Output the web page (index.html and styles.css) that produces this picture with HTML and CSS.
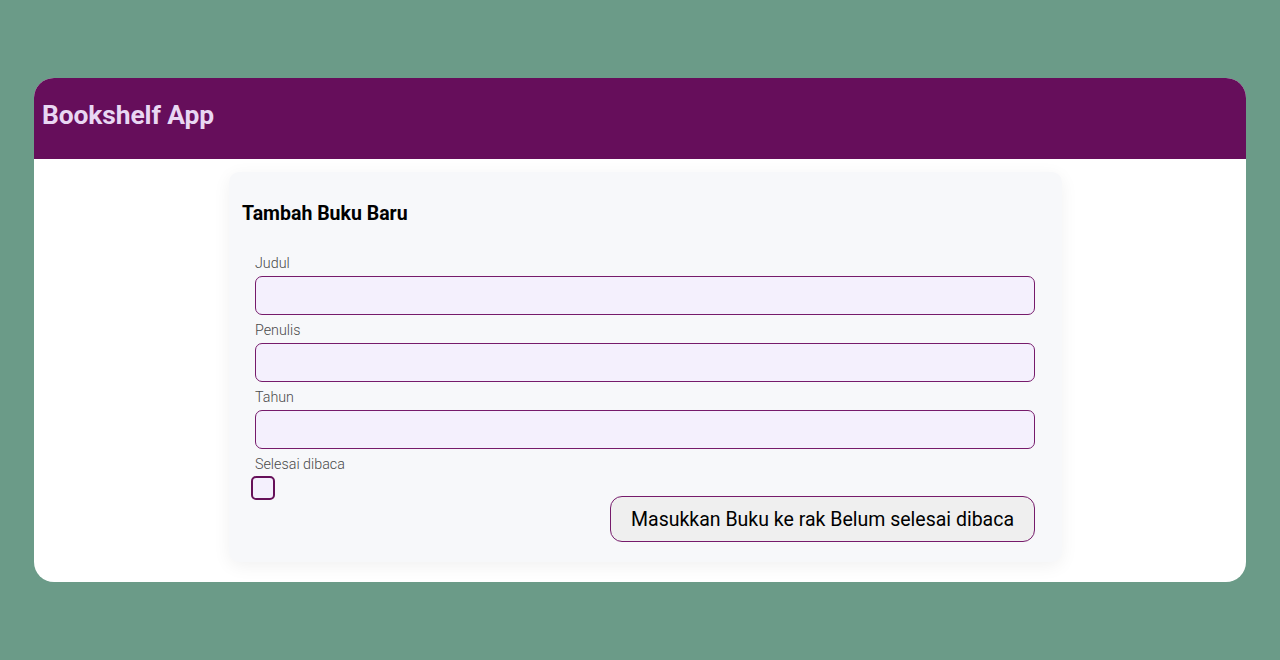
FILE: index.html
```html
<!DOCTYPE html>
<html lang="id">
<head>
<meta charset="utf-8">
<title>Bookshelf App</title>
<link rel="stylesheet" href="styles.css">
</head>
<body>
<div class="app">
  <header class="head-bar">
    <h1 class="app-title">Bookshelf App</h1>
  </header>
  <main class="main">
    <section class="input-section">
      <h2 class="section-title">Tambah Buku Baru</h2>
      <form class="book-form">
        <div class="field">
          <label class="field-label" for="title">Judul</label>
          <input class="field-input" id="title" type="text">
        </div>
        <div class="field">
          <label class="field-label" for="author">Penulis</label>
          <input class="field-input" id="author" type="text">
        </div>
        <div class="field">
          <label class="field-label" for="year">Tahun</label>
          <input class="field-input" id="year" type="text">
        </div>
        <div class="field field-check">
          <label class="field-label" for="done">Selesai dibaca</label>
          <div class="check-row">
            <input class="check" id="done" type="checkbox">
            <button class="submit" type="button">Masukkan Buku ke rak Belum selesai dibaca</button>
          </div>
        </div>
      </form>
    </section>
  </main>
</div>
</body>
</html>
```

FILE: styles.css
```css
* { box-sizing: border-box; }
html, body { height: 100%; }
body {
  margin: 0;
  background: #6b9b88;
  font-family: Roboto, "Liberation Sans", sans-serif;
  padding: 78px 34px 0 34px;
}
.app {
  background: #ffffff;
  border-radius: 20px;
  overflow: hidden;
  height: 504px;
  display: flex;
  flex-direction: column;
}
.head-bar {
  background: #660e5b;
  height: 81px;
  display: flex;
  align-items: center;
  padding: 0 8px;
}
.app-title {
  margin: 0;
  font-size: 26.4px;
  font-weight: 700;
  color: #e9d7f3;
  letter-spacing: -0.1px;
  position: relative;
  top: -4px;
}
.main {
  display: flex;
  justify-content: center;
  padding-top: 13px;
  padding-left: 11px;
}
.input-section {
  width: 833px;
  background: #f7f8fa;
  border-radius: 10px;
  box-shadow: 0 4px 18px rgba(0,0,0,0.06);
  padding: 30px 13px 20px 13px;
}
.section-title {
  margin: 0 0 30px 0;
  font-size: 19.5px;
  line-height: 23px;
  font-weight: 700;
  color: #000;
}
.book-form {
  padding: 0 14px 0 13px;
  display: flex;
  flex-direction: column;
}
.field {
  display: flex;
  flex-direction: column;
  margin-bottom: 7px;
}
.field-label {
  font-size: 14.3px;
  line-height: 16px;
  font-weight: 300;
  color: #4a4a4a;
  margin-bottom: 5px;
}
.field-input {
  height: 39px;
  width: 100%;
  border: 1.5px solid #761b6b;
  border-radius: 7px;
  background: #f4f0fd;
  font-family: inherit;
  font-size: 16px;
  padding: 0 10px;
  outline: none;
}
.field-check { margin-bottom: 0; }
.field-check .field-label { margin-bottom: 4px; }
.check-row {
  display: flex;
  justify-content: space-between;
  align-items: flex-start;
}
.check {
  appearance: none;
  -webkit-appearance: none;
  width: 24px;
  height: 24px;
  margin: 0 0 0 -4px;
  border: 2px solid #661059;
  border-radius: 5px;
  background: #f4f0fd;
}
.submit {
  margin-top: 20px;
  height: 46px;
  padding: 0 20px;
  background: #efefef;
  border: 1.5px solid #761b6b;
  border-radius: 12px;
  font-family: Roboto, "Liberation Sans", sans-serif;
  font-size: 19.5px;
  color: #000;
}
```
